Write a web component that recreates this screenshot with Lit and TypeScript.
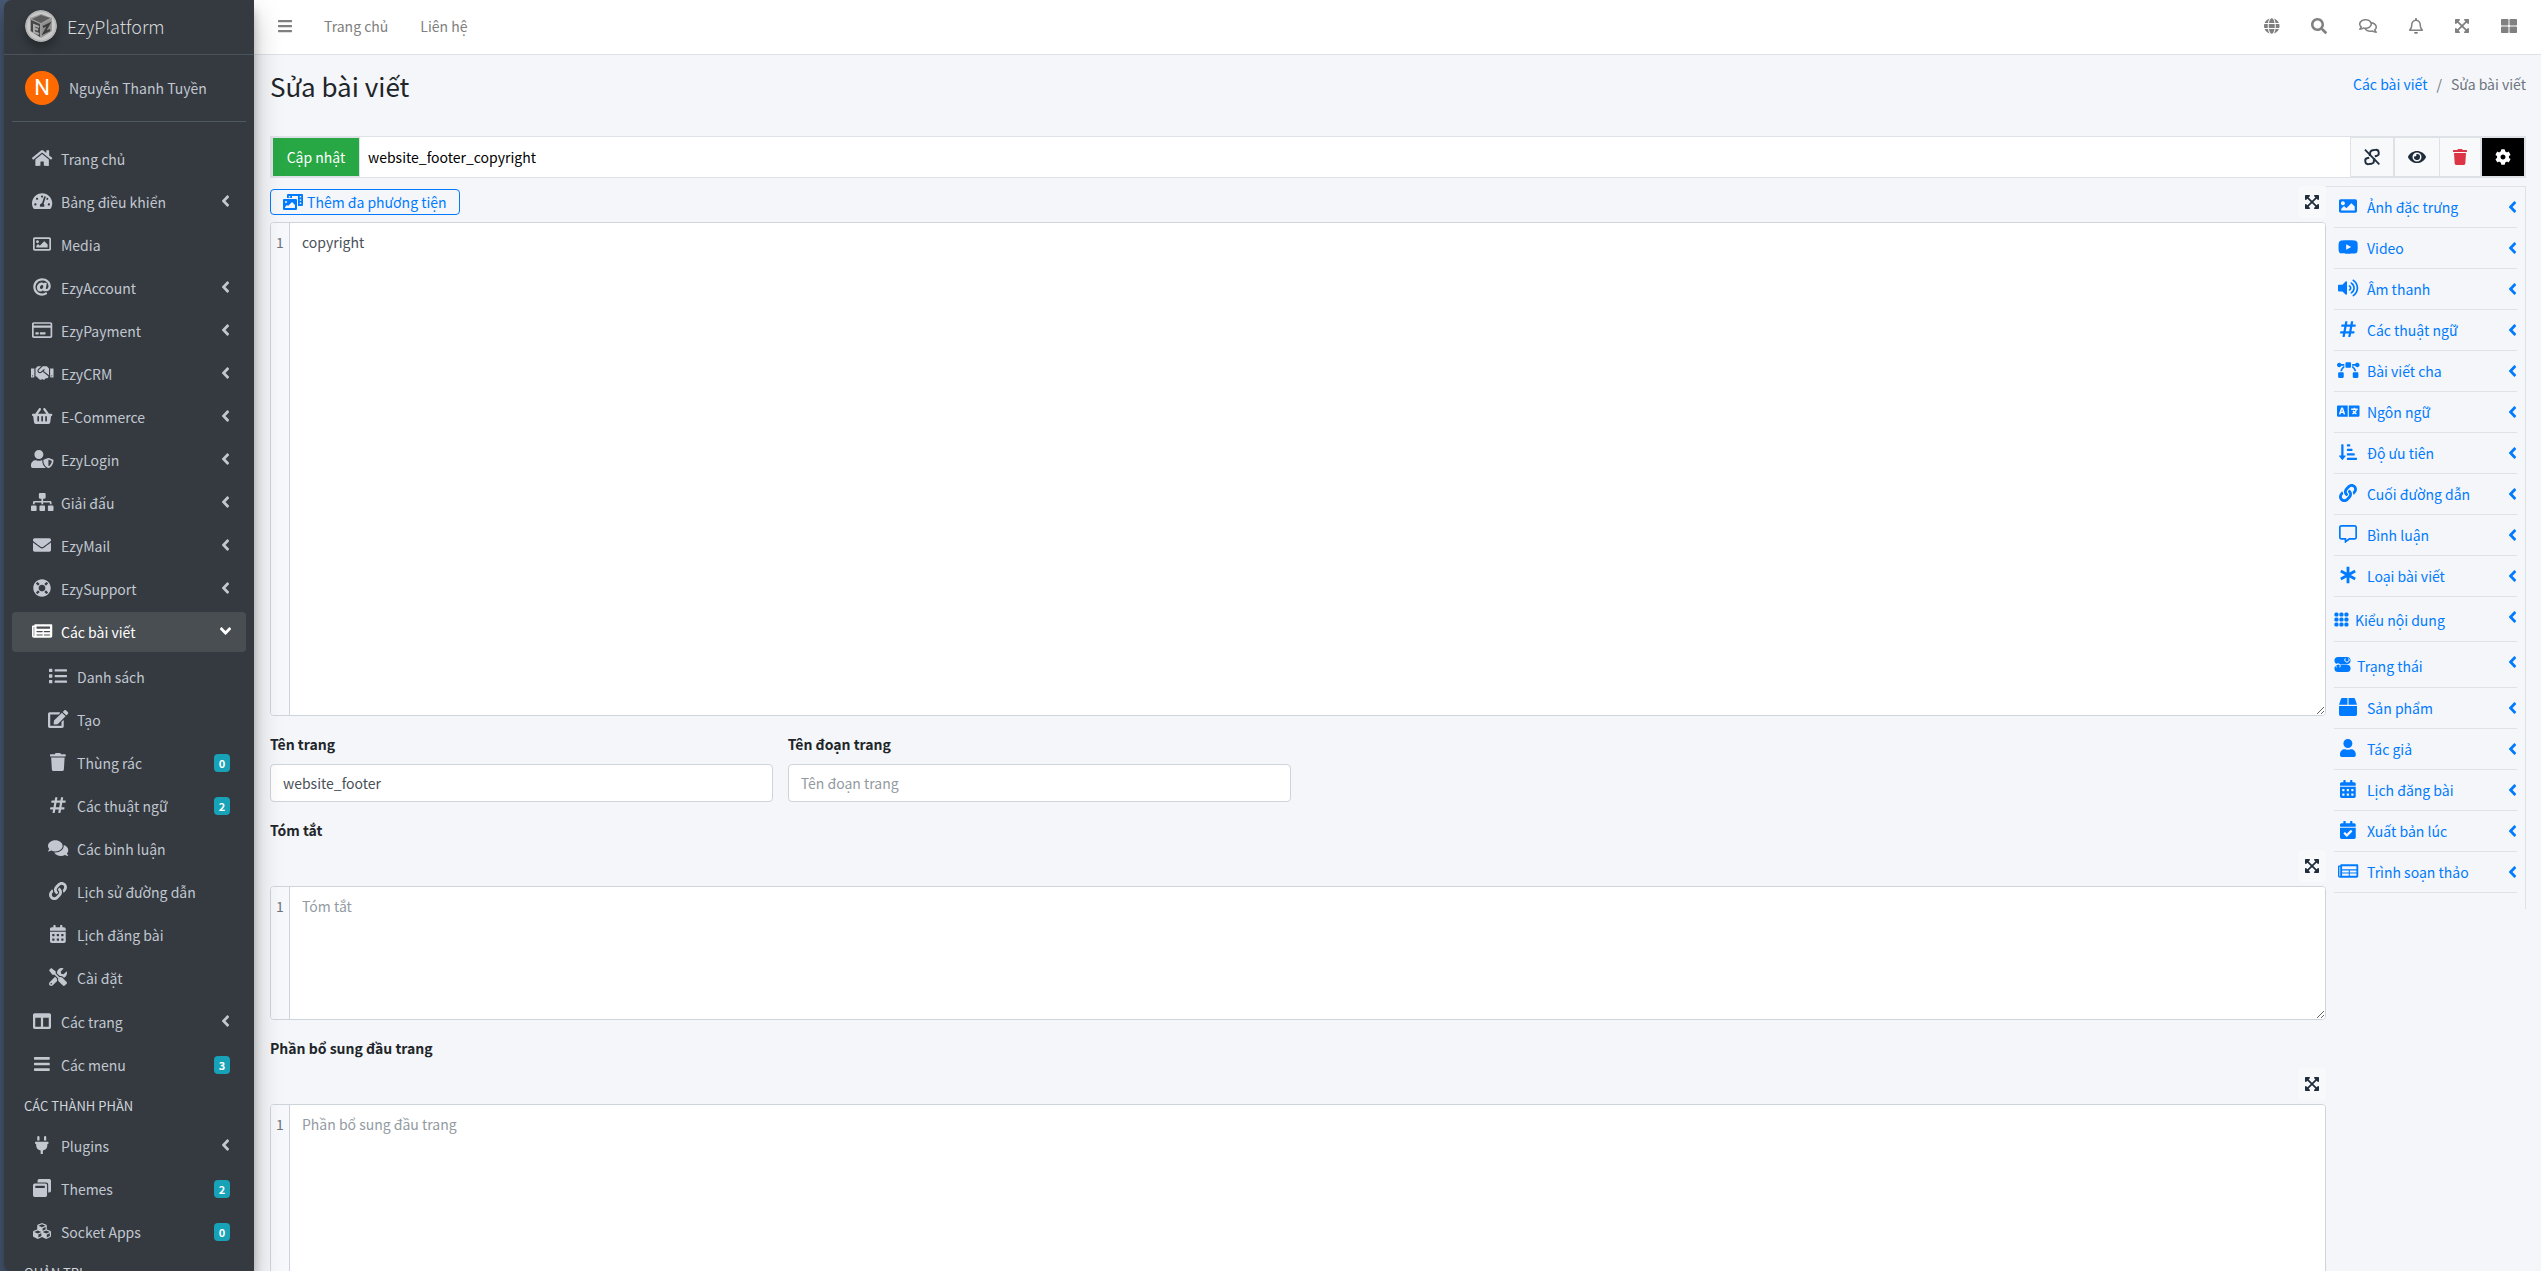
import { LitElement, html, css, svg, nothing } from "lit";
import { customElement, property } from "lit/decorators.js";
import { classMap } from "lit/directives/class-map.js";

type Glyph = { w: number; d?: string; art?: unknown };

const GLYPHS: Record<string, Glyph> = {
  home: { w: 576, d: "M280.37 148.26L96 300.11V464a16 16 0 0 0 16 16l112.06-.29a16 16 0 0 0 15.92-16V368a16 16 0 0 1 16-16h64a16 16 0 0 1 16 16v95.64a16 16 0 0 0 16 16.05L464 480a16 16 0 0 0 16-16V300L295.67 148.26a12.19 12.19 0 0 0-15.3 0zM571.6 251.47L488 182.56V44.05a12 12 0 0 0-12-12h-56a12 12 0 0 0-12 12v72.61L318.47 43a48 48 0 0 0-61 0L4.34 251.47a12 12 0 0 0-1.6 16.9l25.5 31A12 12 0 0 0 45.15 301l235.22-193.74a12.19 12.19 0 0 1 15.3 0L530.9 301a12 12 0 0 0 16.9-1.6l25.5-31a12 12 0 0 0-1.7-16.93z" },
  gauge: { w: 576, d: "M288 32C128.94 32 0 160.94 0 320c0 52.8 14.25 102.26 39.06 144.8 5.61 9.62 16.3 15.2 27.44 15.2h443c11.14 0 21.83-5.58 27.44-15.2C561.75 422.26 576 372.8 576 320c0-159.06-128.94-288-288-288zm0 64c14.71 0 26.58 10.13 30.32 23.65-1.11 2.26-2.64 4.23-3.45 6.67l-9.22 27.67c-5.13 3.49-10.97 6.01-17.64 6.01-17.67 0-32-14.33-32-32S270.33 96 288 96zM96 384c-17.67 0-32-14.33-32-32s14.33-32 32-32 32 14.33 32 32-14.33 32-32 32zm48-160c-17.67 0-32-14.33-32-32s14.33-32 32-32 32 14.33 32 32-14.33 32-32 32zm246.77-72.41l-61.33 184C343.13 347.33 352 364.54 352 384c0 11.72-3.38 22.55-8.88 32H232.88c-5.5-9.45-8.88-20.28-8.88-32 0-33.94 26.5-61.43 59.9-63.59l61.34-184.01c4.17-12.56 17.73-19.45 30.36-15.17 12.57 4.19 19.35 17.79 15.17 30.36zm14.66 57.2l15.52-46.55c3.47-1.29 7.13-2.23 11.05-2.23 17.67 0 32 14.33 32 32s-14.33 32-32 32c-11.38-.01-20.89-6.28-26.57-15.22zM480 384c-17.67 0-32-14.33-32-32s14.33-32 32-32 32 14.33 32 32-14.33 32-32 32z" },
  imageOutline: { w: 512, d: "M464 64H48C21.49 64 0 85.49 0 112v288c0 26.51 21.49 48 48 48h416c26.51 0 48-21.49 48-48V112c0-26.51-21.49-48-48-48zm-6 336H54a6 6 0 0 1-6-6V118a6 6 0 0 1 6-6h404a6 6 0 0 1 6 6v276a6 6 0 0 1-6 6zM128 152c-22.091 0-40 17.909-40 40s17.909 40 40 40 40-17.909 40-40-17.909-40-40-40zM96 352h320v-80l-87.515-87.515c-4.686-4.686-12.284-4.686-16.971 0L192 304l-39.515-39.515c-4.686-4.686-12.284-4.686-16.971 0L96 304v48z" },
  at: { w: 512, d: "M256 8C118.941 8 8 118.919 8 256c0 137.059 110.919 248 248 248 48.154 0 95.342-14.14 135.408-40.223 12.005-7.815 14.625-24.288 5.552-35.372l-10.177-12.433c-7.671-9.371-21.179-11.667-31.373-5.129C325.92 429.757 291.314 440 256 440c-101.458 0-184-82.542-184-184S154.542 72 256 72c100.139 0 184 57.619 184 160 0 38.786-21.093 79.742-58.17 83.693-17.349-.454-16.91-12.857-13.476-30.024l23.433-121.11C394.653 149.75 383.308 136 368.225 136h-44.981a13.518 13.518 0 0 0-13.432 11.993l-.01.092c-14.697-17.901-40.448-21.775-59.971-21.775-74.58 0-137.831 62.234-137.831 151.46 0 65.303 36.785 105.87 96 105.87 26.984 0 57.369-15.637 74.991-38.333 9.522 34.104 40.613 34.104 70.71 34.104C462.609 379.41 504 307.798 504 232 504 95.653 394.023 8 256 8zm-21.68 304.43c-22.249 0-36.07-15.623-36.07-40.771 0-44.993 30.779-72.729 58.63-72.729 22.292 0 35.601 15.241 35.601 40.77 0 45.061-33.875 72.73-58.161 72.73z" },
  card: { w: 576, d: "M527.9 32H48.1C21.5 32 0 53.5 0 80v352c0 26.5 21.5 48 48.1 48h479.8c26.6 0 48.1-21.5 48.1-48V80c0-26.5-21.5-48-48.1-48zM54.1 80h467.8c3.3 0 6 2.7 6 6v42H48.1V86c0-3.3 2.7-6 6-6zm467.8 352H54.1c-3.3 0-6-2.7-6-6V192h479.8v234c0 3.3-2.7 6-6 6zM192 332v40c0 6.6-5.4 12-12 12h-72c-6.6 0-12-5.4-12-12v-40c0-6.6 5.4-12 12-12h72c6.6 0 12 5.4 12 12zm192 0v40c0 6.6-5.4 12-12 12H236c-6.6 0-12-5.4-12-12v-40c0-6.6 5.4-12 12-12h136c6.6 0 12 5.4 12 12z" },
  handshake: { w: 640, d: "M434.7 64h-85.9c-8 0-15.7 3-21.6 8.4l-98.3 90c-.1.1-.2.3-.3.4-16.6 15.6-16.3 40.5-2.1 56 12.7 13.9 39.4 17.6 56.1 2.7.1-.1.3-.1.4-.2l79.9-73.2c6.5-5.9 16.7-5.5 22.6 1 6 6.5 5.5 16.6-1 22.6l-26.1 23.9L504 313.8c2.9 2.4 5.5 5 7.9 7.7V128l-54.6-54.6c-5.9-6-14.1-9.4-22.6-9.4zM544 128.2v223.9c0 17.7 14.3 32 32 32h64V128.2h-96zm48 223.9c-8.8 0-16-7.2-16-16s7.2-16 16-16 16 7.2 16 16-7.2 16-16 16zM0 384h64c17.7 0 32-14.3 32-32V128.2H0V384zm48-63.9c8.8 0 16 7.2 16 16s-7.2 16-16 16-16-7.2-16-16c0-8.9 7.2-16 16-16zm435.9 18.6L334.6 217.5l-30 27.5c-29.7 27.1-75.2 24.5-101.7-4.4-26.9-29.4-24.8-74.9 4.4-101.7L289.1 64h-83.8c-8.5 0-16.6 3.4-22.6 9.4L128 128v223.9h18.3l90.5 81.9c27.4 22.3 67.7 18.1 90-9.3l.2-.2 17.9 15.5c15.9 13 39.4 10.5 52.3-5.4l31.4-38.6 5.4 4.4c13.7 11.1 33.9 9.1 45-4.7l9.5-11.7c11.2-13.8 9.1-33.9-4.6-45.1z" },
  basket: { w: 576, d: "M576 216v16c0 13.255-10.745 24-24 24h-8l-26.113 182.788C514.509 462.435 494.257 480 470.37 480H105.63c-23.887 0-44.139-17.565-47.518-41.212L32 256h-8c-13.255 0-24-10.745-24-24v-16c0-13.255 10.745-24 24-24h67.341l106.78-146.821c10.395-14.292 30.407-17.453 44.701-7.058 14.293 10.395 17.453 30.408 7.058 44.701L170.477 192h235.046L326.12 82.821c-10.395-14.292-7.234-34.306 7.059-44.701 14.291-10.395 34.306-7.235 44.701 7.058L484.659 192H552c13.255 0 24 10.745 24 24zM312 392V280c0-13.255-10.745-24-24-24s-24 10.745-24 24v112c0 13.255 10.745 24 24 24s24-10.745 24-24zm112 0V280c0-13.255-10.745-24-24-24s-24 10.745-24 24v112c0 13.255 10.745 24 24 24s24-10.745 24-24zm-224 0V280c0-13.255-10.745-24-24-24s-24 10.745-24 24v112c0 13.255 10.745 24 24 24s24-10.745 24-24z" },
  userShield: { w: 640, d: "M622.3 271.1l-115.2-45c-4.1-1.6-12.6-3.7-22.2 0l-115.2 45c-10.7 4.2-17.7 14-17.7 24.9 0 111.6 68.7 188.8 132.9 213.9 9.6 3.7 18 1.6 22.2 0C558.4 489.9 640 420.5 640 296c0-10.9-7-20.7-17.7-24.9zM496 462.4V273.3l95.5 37.3c-5.6 87.1-60.9 135.4-95.5 151.8zM224 256c70.7 0 128-57.3 128-128S294.7 0 224 0 96 57.3 96 128s57.3 128 128 128zm96 40c0-2.5.8-4.8 1.1-7.2-2.5-.1-4.9-.8-7.5-.8h-16.7c-22.2 10.2-46.9 16-72.9 16s-50.6-5.8-72.9-16h-16.7C60.2 288 0 348.2 0 422.4V464c0 26.5 21.5 48 48 48h352c6.8 0 13.3-1.5 19.2-4-54-42.9-99.2-116.7-99.2-212z" },
  sitemap: { w: 640, d: "M128 352H32c-17.67 0-32 14.33-32 32v96c0 17.67 14.33 32 32 32h96c17.67 0 32-14.33 32-32v-96c0-17.67-14.33-32-32-32zm-24-80h192v48h48v-48h192v48h48v-57.59c0-21.17-17.23-38.41-38.41-38.41H344v-64h40c17.67 0 32-14.33 32-32V32c0-17.67-14.33-32-32-32H256c-17.67 0-32 14.33-32 32v96c0 17.67 14.33 32 32 32h40v64H94.41C73.23 224 56 241.23 56 262.41V320h48v-48zm264 80h-96c-17.67 0-32 14.33-32 32v96c0 17.67 14.33 32 32 32h96c17.67 0 32-14.33 32-32v-96c0-17.67-14.33-32-32-32zm240 0h-96c-17.67 0-32 14.33-32 32v96c0 17.67 14.33 32 32 32h96c17.67 0 32-14.33 32-32v-96c0-17.67-14.33-32-32-32z" },
  envelope: { w: 512, d: "M502.3 190.8c3.9-3.1 9.7-.2 9.7 4.7V400c0 26.5-21.5 48-48 48H48c-26.5 0-48-21.5-48-48V195.6c0-5 5.7-7.8 9.7-4.7 22.4 17.4 52.1 39.5 154.1 113.6 21.1 15.4 56.7 47.8 92.2 47.6 35.7.3 72-32.8 92.3-47.6 102-74.1 131.6-96.3 154-113.7zM256 320c23.2.4 56.6-29.2 73.4-41.4 132.7-96.3 142.8-104.7 173.4-128.7 5.8-4.5 9.2-11.5 9.2-18.9v-19c0-26.5-21.5-48-48-48H48c-26.5 0-48 21.5-48 48v19c0 7.4 3.4 14.3 9.2 18.9 30.6 23.9 40.7 32.4 173.4 128.7 16.8 12.2 50.2 41.8 73.4 41.4z" },
  lifeRing: { w: 512, d: "M256 8C119.033 8 8 119.033 8 256s111.033 248 248 248 248-111.033 248-248S392.967 8 256 8zm173.696 119.559l-63.399 63.399c-10.987-18.559-26.67-34.252-45.255-45.255l63.399-63.399a218.396 218.396 0 0 1 45.255 45.255zM256 352c-53.019 0-96-42.981-96-96s42.981-96 96-96 96 42.981 96 96-42.981 96-96 96zM127.559 82.304l63.399 63.399c-18.559 10.987-34.252 26.67-45.255 45.255l-63.399-63.399a218.372 218.372 0 0 1 45.255-45.255zM82.304 384.441l63.399-63.399c10.987 18.559 26.67 34.252 45.255 45.255l-63.399 63.399a218.396 218.396 0 0 1-45.255-45.255zm302.137 45.255l-63.399-63.399c18.559-10.987 34.252-26.67 45.255-45.255l63.399 63.399a218.403 218.403 0 0 1-45.255 45.255z" },
  newspaper: { w: 576, d: "M552 64H88c-13.255 0-24 10.745-24 24v8H24c-13.255 0-24 10.745-24 24v272c0 30.928 25.072 56 56 56h472c26.51 0 48-21.49 48-48V88c0-13.255-10.745-24-24-24zM56 400a8 8 0 0 1-8-8V144h16v248a8 8 0 0 1-8 8zm236-16H140c-6.627 0-12-5.373-12-12v-8c0-6.627 5.373-12 12-12h152c6.627 0 12 5.373 12 12v8c0 6.627-5.373 12-12 12zm208 0H348c-6.627 0-12-5.373-12-12v-8c0-6.627 5.373-12 12-12h152c6.627 0 12 5.373 12 12v8c0 6.627-5.373 12-12 12zm-208-96H140c-6.627 0-12-5.373-12-12v-8c0-6.627 5.373-12 12-12h152c6.627 0 12 5.373 12 12v8c0 6.627-5.373 12-12 12zm208 0H348c-6.627 0-12-5.373-12-12v-8c0-6.627 5.373-12 12-12h152c6.627 0 12 5.373 12 12v8c0 6.627-5.373 12-12 12zm0-96H140c-6.627 0-12-5.373-12-12v-40c0-6.627 5.373-12 12-12h360c6.627 0 12 5.373 12 12v40c0 6.627-5.373 12-12 12z" },
  list: { w: 512, d: "M80 368H16a16 16 0 0 0-16 16v64a16 16 0 0 0 16 16h64a16 16 0 0 0 16-16v-64a16 16 0 0 0-16-16zm0-320H16A16 16 0 0 0 0 64v64a16 16 0 0 0 16 16h64a16 16 0 0 0 16-16V64a16 16 0 0 0-16-16zm0 160H16a16 16 0 0 0-16 16v64a16 16 0 0 0 16 16h64a16 16 0 0 0 16-16v-64a16 16 0 0 0-16-16zm416 176H176a16 16 0 0 0-16 16v32a16 16 0 0 0 16 16h320a16 16 0 0 0 16-16v-32a16 16 0 0 0-16-16zm0-320H176a16 16 0 0 0-16 16v32a16 16 0 0 0 16 16h320a16 16 0 0 0 16-16V80a16 16 0 0 0-16-16zm0 160H176a16 16 0 0 0-16 16v32a16 16 0 0 0 16 16h320a16 16 0 0 0 16-16v-32a16 16 0 0 0-16-16z" },
  edit: { w: 576, d: "M402.6 83.2l90.2 90.2c3.8 3.8 3.8 10 0 13.8L274.4 405.6l-92.8 10.3c-12.4 1.4-22.9-9.1-21.5-21.5l10.3-92.8L388.8 83.2c3.8-3.8 10-3.8 13.8 0zm162-22.9l-48.8-48.8c-15.2-15.2-39.9-15.2-55.2 0l-35.4 35.4c-3.8 3.8-3.8 10 0 13.8l90.2 90.2c3.8 3.8 10 3.8 13.8 0l35.4-35.4c15.2-15.3 15.2-40 0-55.2zM384 346.2V448H64V128h229.8c3.2 0 6.2-1.3 8.5-3.5l40-40c7.6-7.6 2.2-20.5-8.5-20.5H48C21.5 64 0 85.5 0 112v352c0 26.5 21.5 48 48 48h352c26.5 0 48-21.5 48-48V306.2c0-10.7-12.9-16-20.5-8.5l-40 40c-2.2 2.3-3.5 5.3-3.5 8.5z" },
  trash: { w: 448, d: "M432 32H312l-9.4-18.7A24 24 0 0 0 281.1 0H166.8a23.72 23.72 0 0 0-21.4 13.3L136 32H16A16 16 0 0 0 0 48v32a16 16 0 0 0 16 16h416a16 16 0 0 0 16-16V48a16 16 0 0 0-16-16zM53.2 467a48 48 0 0 0 47.9 45h245.8a48 48 0 0 0 47.9-45L416 128H32z" },
  hash: { w: 448, d: "M440.667 182.109l7.143-40c1.313-7.355-4.342-14.109-11.813-14.109h-74.81l14.623-81.891C377.123 38.754 371.468 32 363.997 32h-40.632a12 12 0 0 0-11.813 9.891L296.175 128H197.54l14.623-81.891C213.477 38.754 207.822 32 200.35 32h-40.632a12 12 0 0 0-11.813 9.891L132.528 128H53.432a12 12 0 0 0-11.813 9.891l-7.143 40C33.163 185.246 38.818 192 46.289 192h74.81L98.242 320H19.146a12 12 0 0 0-11.813 9.891l-7.143 40C-1.123 377.246 4.532 384 12.003 384h74.81L72.19 465.891C70.877 473.246 76.532 480 84.003 480h40.632a12 12 0 0 0 11.813-9.891L151.826 384h98.634l-14.623 81.891C234.523 473.246 240.178 480 247.65 480h40.632a12 12 0 0 0 11.813-9.891L315.472 384h79.096a12 12 0 0 0 11.813-9.891l7.143-40c1.313-7.355-4.342-14.109-11.813-14.109h-74.81l22.857-128h79.096a12 12 0 0 0 11.813-9.891zM261.889 320h-98.634l22.857-128h98.634l-22.857 128z" },
  comments: { w: 576, d: "M416 192c0-88.4-93.1-160-208-160S0 103.6 0 192c0 34.3 14.1 65.9 38 92-13.4 30.2-35.5 54.2-35.8 54.5-2.2 2.3-2.8 5.7-1.5 8.7S4.8 352 8 352c36.6 0 66.9-12.3 88.7-25 32.2 15.7 70.3 25 111.3 25 114.9 0 208-71.6 208-160zm122 220c23.9-26 38-57.7 38-92 0-66.9-53.5-124.2-129.3-148.1.9 6.6 1.3 13.3 1.3 20.1 0 105.9-107.7 192-240 192-10.8 0-21.3-.8-31.7-1.9C207.8 439.6 281.8 480 368 480c41 0 79.1-9.2 111.3-25 21.8 12.7 52.1 25 88.7 25 3.2 0 6.1-1.9 7.3-4.8 1.3-2.9.7-6.3-1.5-8.7-.3-.3-22.4-24.2-35.8-54.5z" },
  commentsOutline: { w: 576, d: "M532 386.2c27.5-27.1 44-61.1 44-98.2 0-80-76.5-146.1-176.2-157.9C368.3 72.5 294.3 32 208 32 93.1 32 0 103.6 0 192c0 37 16.5 71 44 98.2-15.3 30.7-37.3 54.5-37.7 54.9-6.3 6.7-8.1 16.5-4.4 25 3.6 8.5 12 14 21.2 14 53.5 0 96.7-20.2 125.2-38.8 9.2 2.1 18.7 3.7 28.4 4.9C208.1 407.6 281.8 448 368 448c20.8 0 40.8-2.4 59.8-6.8C456.3 459.7 499.4 480 553 480c9.2 0 17.5-5.5 21.2-14 3.6-8.5 1.9-18.3-4.4-25-.4-.3-22.5-24.1-37.8-54.8zm-392.8-92.3L122.1 305c-14.1 9.1-28.5 16.3-43.1 21.4 2.7-4.7 5.4-9.7 8-14.8l15.5-31.1L77.7 256C64.2 242.6 48 220.7 48 192c0-60.7 73.3-112 160-112s160 51.3 160 112-73.3 112-160 112c-16.5 0-33-1.9-49-5.6l-19.8-4.5zM498.3 352l-24.7 24.4 15.5 31.1c2.6 5.1 5.3 10.1 8 14.8-14.6-5.1-29-12.3-43.1-21.4l-17.1-11.1-19.9 4.6c-16 3.7-32.5 5.6-49 5.6-54 0-102.2-20.1-131.3-49.7C338 339.5 416 272.9 416 192c0-3.4-.4-6.7-.7-10C479.7 196.5 528 238.8 528 288c0 28.7-16.2 50.6-29.7 64z" },
  link: { w: 512, d: "M326.612 185.391c59.747 59.809 58.927 155.698.36 214.59-.11.12-.24.25-.36.37l-67.2 67.2c-59.27 59.27-155.699 59.262-214.96 0-59.27-59.26-59.27-155.7 0-214.96l37.106-37.106c9.84-9.84 26.786-3.3 27.294 10.606.648 17.722 3.826 35.527 9.69 52.721 1.986 5.822.567 12.262-3.783 16.612l-13.087 13.087c-28.026 28.026-28.905 73.66-1.155 101.96 28.024 28.579 74.086 28.749 102.325.51l67.2-67.19c28.191-28.191 28.073-73.757 0-101.83-3.701-3.694-7.429-6.564-10.341-8.569a16.037 16.037 0 0 1-6.947-12.606c-.396-10.567 3.348-21.456 11.698-29.806l21.054-21.055c5.521-5.521 14.182-6.199 20.584-1.731a152.482 152.482 0 0 1 20.522 17.197zM467.547 44.449c-59.261-59.262-155.69-59.27-214.96 0l-67.2 67.2c-.12.12-.25.25-.36.37-58.566 58.892-59.387 154.781.36 214.59a152.454 152.454 0 0 0 20.521 17.196c6.402 4.468 15.064 3.789 20.584-1.731l21.054-21.055c8.35-8.35 12.094-19.239 11.698-29.806a16.037 16.037 0 0 0-6.947-12.606c-2.912-2.005-6.64-4.875-10.341-8.569-28.073-28.073-28.191-73.639 0-101.83l67.2-67.19c28.239-28.239 74.3-28.069 102.325.51 27.75 28.3 26.872 73.934-1.155 101.96l-13.087 13.087c-4.35 4.35-5.769 10.79-3.783 16.612 5.864 17.194 9.042 34.999 9.69 52.721.509 13.906 17.454 20.446 27.294 10.606l37.106-37.106c59.271-59.259 59.271-155.699.001-214.959z" },
  calendar: { w: 448, d: "M0 464c0 26.5 21.5 48 48 48h352c26.5 0 48-21.5 48-48V192H0v272zm320-196c0-6.6 5.4-12 12-12h40c6.6 0 12 5.4 12 12v40c0 6.6-5.4 12-12 12h-40c-6.6 0-12-5.4-12-12v-40zm0 128c0-6.6 5.4-12 12-12h40c6.6 0 12 5.4 12 12v40c0 6.6-5.4 12-12 12h-40c-6.6 0-12-5.4-12-12v-40zM192 268c0-6.6 5.4-12 12-12h40c6.6 0 12 5.4 12 12v40c0 6.6-5.4 12-12 12h-40c-6.6 0-12-5.4-12-12v-40zm0 128c0-6.6 5.4-12 12-12h40c6.6 0 12 5.4 12 12v40c0 6.6-5.4 12-12 12h-40c-6.6 0-12-5.4-12-12v-40zM64 268c0-6.6 5.4-12 12-12h40c6.6 0 12 5.4 12 12v40c0 6.6-5.4 12-12 12H76c-6.6 0-12-5.4-12-12v-40zm0 128c0-6.6 5.4-12 12-12h40c6.6 0 12 5.4 12 12v40c0 6.6-5.4 12-12 12H76c-6.6 0-12-5.4-12-12v-40zM400 64h-48V16c0-8.8-7.2-16-16-16h-32c-8.8 0-16 7.2-16 16v48H160V16c0-8.8-7.2-16-16-16h-32c-8.8 0-16 7.2-16 16v48H48C21.5 64 0 85.5 0 112v48h448v-48c0-26.5-21.5-48-48-48z" },
  calendarCheck: { w: 448, d: "M436 160H12c-6.627 0-12-5.373-12-12v-36c0-26.51 21.49-48 48-48h48V12c0-6.627 5.373-12 12-12h40c6.627 0 12 5.373 12 12v52h128V12c0-6.627 5.373-12 12-12h40c6.627 0 12 5.373 12 12v52h48c26.51 0 48 21.49 48 48v36c0 6.627-5.373 12-12 12zM12 192h424c6.627 0 12 5.373 12 12v260c0 26.51-21.49 48-48 48H48c-26.51 0-48-21.49-48-48V204c0-6.627 5.373-12 12-12zm333.296 95.947l-28.169-28.398c-4.667-4.705-12.265-4.736-16.97-.068L194.12 364.665l-45.98-46.352c-4.667-4.705-12.266-4.736-16.971-.068l-28.397 28.17c-4.705 4.667-4.736 12.265-.068 16.97l82.601 83.269c4.667 4.705 12.265 4.736 16.97.068l142.953-141.805c4.705-4.667 4.736-12.265.068-16.97z" },
  tools: { w: 512, d: "M501.1 395.7L384 278.6c-23.1-23.1-57.6-27.6-85.4-13.9L192 158.1V96L64 0 0 64l96 128h62.1l106.6 106.6c-13.6 27.8-9.2 62.3 13.9 85.4l117.1 117.1c14.6 14.6 38.2 14.6 52.7 0l52.7-52.7c14.5-14.6 14.5-38.2 0-52.7zM331.7 225c28.3 0 54.9 11 74.9 31l19.4 19.4c15.8-6.9 30.8-16.5 43.8-29.5 37.1-37.1 49.7-89.3 37.9-136.7-2.2-9-13.5-12.1-20.1-5.5l-74.4 74.4-67.9-11.3L334 98.9l74.4-74.4c6.6-6.6 3.4-17.9-5.7-20.2-47.4-11.7-99.6.9-136.6 37.9-28.5 28.5-41.9 66.1-41.2 103.6l82.1 82.1c8.1-1.9 16.5-2.9 24.7-2.9zm-103.9 82l-56.7-56.7L18.7 402.8c-25 25-25 65.5 0 90.5s65.5 25 90.5 0l123.6-123.6c-7.6-19.9-9.9-41.6-5-62.7zM64 472c-13.2 0-24-10.8-24-24 0-13.3 10.7-24 24-24s24 10.7 24 24c0 13.2-10.7 24-24 24z" },
  columns: { w: 512, d: "M464 32H48C21.49 32 0 53.49 0 80v352c0 26.51 21.49 48 48 48h416c26.51 0 48-21.49 48-48V80c0-26.51-21.49-48-48-48zM224 416H64V160h160v256zm224 0H288V160h160v256z" },
  bars: { w: 448, d: "M16 132h416c8.837 0 16-7.163 16-16V76c0-8.837-7.163-16-16-16H16C7.163 60 0 67.163 0 76v40c0 8.837 7.163 16 16 16zm0 160h416c8.837 0 16-7.163 16-16v-40c0-8.837-7.163-16-16-16H16c-8.837 0-16 7.163-16 16v40c0 8.837 7.163 16 16 16zm0 160h416c8.837 0 16-7.163 16-16v-40c0-8.837-7.163-16-16-16H16c-8.837 0-16 7.163-16 16v40c0 8.837 7.163 16 16 16z" },
  plug: { w: 384, d: "M320 32a32 32 0 0 0-64 0v96h64zm48 128H16A16 16 0 0 0 0 176v32a16 16 0 0 0 16 16h16v32a160.07 160.07 0 0 0 128 156.8V512h64v-99.2A160.07 160.07 0 0 0 352 256v-32h16a16 16 0 0 0 16-16v-32a16 16 0 0 0-16-16zM128 32a32 32 0 0 0-64 0v96h64z" },
  themes: {
    w: 512,
    d: "M176 0H464a48 48 0 0 1 48 48V336a48 48 0 0 1-48 48H432V160a64 64 0 0 0-64-64H128V48A48 48 0 0 1 176 0zM48 128H352a48 48 0 0 1 48 48V464a48 48 0 0 1-48 48H48a48 48 0 0 1-48-48V176a48 48 0 0 1 48-48zM80 192a16 16 0 0 0-16 16v32a16 16 0 0 0 16 16H320a16 16 0 0 0 16-16V208a16 16 0 0 0-16-16z",
  },
  cubes: { w: 512, d: "M488.6 250.2L392 214V105.5c0-15-9.3-28.4-23.4-33.7l-100-37.5c-8.1-3.1-17.1-3.1-25.3 0l-100 37.5c-14.1 5.3-23.4 18.7-23.4 33.7V214l-96.6 36.2C9.3 255.5 0 268.9 0 283.9V394c0 13.6 7.7 26.1 19.9 32.2l100 50c10.1 5.1 22.1 5.1 32.2 0l103.9-52 103.9 52c10.1 5.1 22.1 5.1 32.2 0l100-50c12.2-6.1 19.9-18.6 19.9-32.2V283.9c0-15-9.3-28.4-23.4-33.7zM358 214.8l-85 31.9v-68.2l85-37v73.3zM154 104.1l102-38.2 102 38.2v.6l-102 41.4-102-41.4v-.6zm84 291.1l-85 42.5v-79.1l85-38.8v75.4zm0-112l-102 41.4-102-41.4v-.6l102-38.2 102 38.2v.6zm240 112l-85 42.5v-79.1l85-38.8v75.4zm0-112l-102 41.4-102-41.4v-.6l102-38.2 102 38.2v.6z" },
  angle: { w: 256, d: "M31.7 239l136-136c9.4-9.4 24.6-9.4 33.9 0l22.6 22.6c9.4 9.4 9.4 24.6 0 33.9L127.9 256l96.4 96.4c9.4 9.4 9.4 24.6 0 33.9L201.7 409c-9.4 9.4-24.6 9.4-33.9 0l-136-136c-9.5-9.4-9.5-24.6-.1-34z" },
  globe: { w: 496, d: "M336.5 160C322 70.7 287.8 8 248 8s-74 62.7-88.5 152h177zM152 256c0 22.2 1.2 43.5 3.3 64h185.3c2.1-20.5 3.3-41.8 3.3-64s-1.2-43.5-3.3-64H155.3c-2.1 20.5-3.3 41.8-3.3 64zm324.7-96c-28.6-67.9-86.5-120.4-158-141.6 24.4 33.8 41.2 84.7 50 141.6h108zM177.2 18.4C105.8 39.6 47.8 92.1 19.3 160h108c8.7-56.9 25.5-107.8 49.9-141.6zM487.4 192H372.7c2.1 21 3.3 42.5 3.3 64s-1.2 43-3.3 64h114.6c5.5-20.5 8.6-41.8 8.6-64s-3.1-43.5-8.5-64zM120 256c0-21.5 1.2-43 3.3-64H8.6C3.2 212.5 0 233.8 0 256s3.2 43.5 8.6 64h114.6c-2-21-3.2-42.5-3.2-64zm39.5 96c14.5 89.3 48.7 152 88.5 152s74-62.7 88.5-152h-177zm159.3 141.6c71.4-21.2 129.4-73.7 158-141.6h-108c-8.8 56.9-25.6 107.8-50 141.6zM19.3 352c28.6 67.9 86.5 120.4 158 141.6-24.4-33.8-41.2-84.7-50-141.6h-108z" },
  search: { w: 512, d: "M505 442.7L405.3 343c-4.5-4.5-10.6-7-17-7H372c27.6-35.3 44-79.7 44-128C416 93.1 322.9 0 208 0S0 93.1 0 208s93.1 208 208 208c48.3 0 92.7-16.4 128-44v16.3c0 6.4 2.5 12.5 7 17l99.7 99.7c9.4 9.4 24.6 9.4 33.9 0l28.3-28.3c9.4-9.4 9.4-24.6.1-34zM208 336c-70.7 0-128-57.2-128-128 0-70.7 57.2-128 128-128 70.7 0 128 57.2 128 128 0 70.7-57.2 128-128 128z" },
  bell: { w: 448, d: "M439.39 362.29c-19.32-20.76-55.47-51.99-55.47-154.29 0-77.7-54.48-139.9-127.94-155.16V32c0-17.67-14.32-32-31.98-32s-31.98 14.33-31.98 32v20.84C118.56 68.1 64.08 130.3 64.08 208c0 102.3-36.15 133.53-55.47 154.29-6 6.45-8.66 14.16-8.61 21.71.11 16.4 12.98 32 32.1 32h383.8c19.12 0 32-15.6 32.1-32 .05-7.55-2.61-15.27-8.61-21.71zM67.53 368c21.22-27.97 44.42-74.33 44.53-159.42 0-.2-.06-.38-.06-.58 0-61.86 50.14-112 112-112s112 50.14 112 112c0 .2-.06.38-.06.58.11 85.1 23.31 131.46 44.53 159.42H67.53zM224 512c35.32 0 63.97-28.65 63.97-64H160.03c0 35.35 28.65 64 63.97 64z" },
  expand: { w: 448, d: "M448 344v112a23.94 23.94 0 0 1-24 24H312c-21.39 0-32.09-25.9-17-41l36.2-36.2L224 295.6 116.77 402.9 153 439c15.09 15.1 4.39 41-17 41H24a23.94 23.94 0 0 1-24-24V344c0-21.4 25.89-32.1 41-17l36.19 36.2L184.46 256 77.18 148.7 41 185c-15.1 15.1-41 4.4-41-17V56a23.94 23.94 0 0 1 24-24h112c21.39 0 32.09 25.9 17 41l-36.2 36.2L224 216.4l107.23-107.3L295 73c-15.09-15.1-4.39-41 17-41h112a23.94 23.94 0 0 1 24 24v112c0 21.4-25.89 32.1-41 17l-36.19-36.2L263.54 256l107.28 107.3L407 327.1c15.1-15.2 41-4.5 41 16.9z" },
  tiles: { w: 512, d: "M296 32h192c13.255 0 24 10.745 24 24v160c0 13.255-10.745 24-24 24H296c-13.255 0-24-10.745-24-24V56c0-13.255 10.745-24 24-24zm-80 0H24C10.745 32 0 42.745 0 56v160c0 13.255 10.745 24 24 24h192c13.255 0 24-10.745 24-24V56c0-13.255-10.745-24-24-24zM0 296v160c0 13.255 10.745 24 24 24h192c13.255 0 24-10.745 24-24V296c0-13.255-10.745-24-24-24H24c-13.255 0-24 10.745-24 24zm296 184h192c13.255 0 24-10.745 24-24V296c0-13.255-10.745-24-24-24H296c-13.255 0-24 10.745-24 24v160c0 13.255 10.745 24 24 24z" },
  unlink: {
    w: 512,
    art: svg`<g fill="none" stroke="currentColor" stroke-width="60"><path d="M195 160V125a92 92 0 0 1 92-92H380a92 92 0 0 1 92 92V140a92 92 0 0 1-92 92H330" transform="rotate(-8 330 130)" /><path d="M317 352v35a92 92 0 0 1-92 92H132a92 92 0 0 1-92-92V372a92 92 0 0 1 92-92H182" transform="rotate(-8 180 380)" /><path d="M30 20L490 492" stroke-width="56" /><path d="M180 225V150M332 287V362" stroke-width="50" /></g>`,
  },
  eye: { w: 576, d: "M572.52 241.4C518.29 135.59 410.93 64 288 64S57.68 135.64 3.48 241.41a32.35 32.35 0 0 0 0 29.19C57.71 376.41 165.07 448 288 448s230.32-71.64 284.52-177.41a32.35 32.35 0 0 0 0-29.19zM288 400a144 144 0 1 1 144-144 143.93 143.93 0 0 1-144 144zm0-240a95.31 95.31 0 0 0-25.31 3.79 47.85 47.85 0 0 1-66.9 66.9A95.78 95.78 0 1 0 288 160z" },
  cog: { w: 512, d: "M487.4 315.7l-42.6-24.6c4.3-23.2 4.3-47 0-70.2l42.6-24.6c4.9-2.8 7.1-8.6 5.5-14-11.1-35.6-30-67.8-54.7-94.6-3.8-4.1-10-5.1-14.8-2.3L380.8 110c-17.9-15.4-38.5-27.3-60.8-35.1V25.8c0-5.6-3.9-10.5-9.4-11.7-36.7-8.2-74.3-7.8-109.2 0-5.5 1.2-9.4 6.1-9.4 11.7V75c-22.2 7.9-42.8 19.8-60.8 35.1L88.7 85.5c-4.9-2.8-11-1.9-14.8 2.3-24.7 26.7-43.6 58.9-54.7 94.6-1.7 5.4.6 11.2 5.5 14L67.3 221c-4.3 23.2-4.3 47 0 70.2l-42.6 24.6c-4.9 2.8-7.1 8.6-5.5 14 11.1 35.6 30 67.8 54.7 94.6 3.8 4.1 10 5.1 14.8 2.3l42.6-24.6c17.9 15.4 38.5 27.3 60.8 35.1v49.2c0 5.6 3.9 10.5 9.4 11.7 36.7 8.2 74.3 7.8 109.2 0 5.5-1.2 9.4-6.1 9.4-11.7v-49.2c22.2-7.9 42.8-19.8 60.8-35.1l42.6 24.6c4.9 2.8 11 1.9 14.8-2.3 24.7-26.7 43.6-58.9 54.7-94.6 1.5-5.5-.7-11.3-5.6-14.1zM256 336c-44.1 0-80-35.9-80-80s35.9-80 80-80 80 35.9 80 80-35.9 80-80 80z" },
  image: { w: 512, d: "M464 448H48c-26.51 0-48-21.49-48-48V112c0-26.51 21.49-48 48-48h416c26.51 0 48 21.49 48 48v288c0 26.51-21.49 48-48 48zM112 120c-30.928 0-56 25.072-56 56s25.072 56 56 56 56-25.072 56-56-25.072-56-56-56zM64 384h384V272l-87.515-87.515c-4.686-4.686-12.284-4.686-16.971 0L208 320l-55.515-55.515c-4.686-4.686-12.284-4.686-16.971 0L64 336v48z" },
  video: { w: 576, d: "M549.655 124.083c-6.281-23.65-24.787-42.276-48.284-48.597C458.781 64 288 64 288 64S117.22 64 74.629 75.486c-23.497 6.322-42.003 24.947-48.284 48.597-11.412 42.867-11.412 132.305-11.412 132.305s0 89.438 11.412 132.305c6.281 23.65 24.787 41.5 48.284 47.821C117.22 448 288 448 288 448s170.78 0 213.371-11.486c23.497-6.321 42.003-24.171 48.284-47.821 11.412-42.867 11.412-132.305 11.412-132.305s0-89.438-11.412-132.305zm-317.51 213.508V175.185l142.739 81.205-142.739 81.201z" },
  volume: { w: 576, d: "M215.03 71.05L126.06 160H24c-13.26 0-24 10.74-24 24v144c0 13.25 10.74 24 24 24h102.06l88.97 88.95c15.03 15.03 40.97 4.47 40.97-16.97V88.02c0-21.46-25.96-31.98-40.97-16.97zm233.32-51.08c-11.17-7.33-26.18-4.24-33.51 6.95-7.34 11.17-4.22 26.18 6.95 33.51 66.27 43.49 105.82 116.6 105.82 195.58 0 78.98-39.55 152.09-105.82 195.58-11.17 7.32-14.29 22.34-6.95 33.5 7.04 10.71 21.93 14.56 33.51 6.95C528.27 439.58 576 351.33 576 256S528.27 72.43 448.35 19.97zM480 256c0-63.53-32.06-121.94-85.77-156.24-11.19-7.14-26.03-3.82-33.12 7.46s-3.78 26.21 7.41 33.36C408.27 165.97 432 209.11 432 256s-23.73 90.02-63.48 115.42c-11.19 7.14-14.5 22.07-7.41 33.36 6.51 10.36 21.12 15.14 33.12 7.46C447.94 377.94 480 319.54 480 256zm-141.77-76.87c-11.58-6.33-26.19-2.16-32.61 9.45-6.39 11.61-2.16 26.2 9.45 32.61C327.98 228.28 336 241.63 336 256c0 14.38-8.02 27.72-20.92 34.81-11.61 6.41-15.84 21-9.45 32.61 6.43 11.66 21.05 15.8 32.61 9.45 28.23-15.55 45.77-45 45.77-76.88s-17.54-61.32-45.78-76.86z" },
  bezier: { w: 640, d: "M368 32h-96c-17.67 0-32 14.33-32 32v96c0 17.67 14.33 32 32 32h96c17.67 0 32-14.33 32-32V64c0-17.67-14.33-32-32-32zM208 88h-84.75C113.75 64.56 90.84 48 64 48 28.66 48 0 76.65 0 112s28.66 64 64 64c26.84 0 49.75-16.56 59.25-40h79.73c-55.37 32.52-95.86 87.32-109.54 152h49.4c11.3-41.61 36.77-77.21 71.04-101.56-3.7-8.08-5.88-16.99-5.88-26.44V88zm-48 232H64c-17.67 0-32 14.33-32 32v96c0 17.67 14.33 32 32 32h96c17.67 0 32-14.33 32-32v-96c0-17.67-14.33-32-32-32zM576 48c-26.84 0-49.75 16.56-59.25 40H432v72c0 9.45-2.19 18.36-5.88 26.44 34.27 24.35 59.74 59.95 71.04 101.56h49.4c-13.68-64.68-54.17-119.48-109.54-152h79.73c9.5 23.44 32.41 40 59.25 40 35.34 0 64-28.65 64-64s-28.66-64-64-64zm0 272h-96c-17.67 0-32 14.33-32 32v96c0 17.67 14.33 32 32 32h96c17.67 0 32-14.33 32-32v-96c0-17.67-14.33-32-32-32z" },
  language: { w: 640, d: "M152.1 236.2c-3.5-12.1-7.8-33.2-7.8-33.2h-.5s-4.3 21.1-7.8 33.2l-11.1 37.5H163zM616 96H336v320h280c13.3 0 24-10.7 24-24V120c0-13.3-10.7-24-24-24zm-24 120c0 6.6-5.4 12-12 12h-11.4c-6.9 23.6-21.7 47.4-42.7 69.9 8.4 6.4 17.1 12.5 26.1 18 5.5 3.4 7.3 10.5 4.1 16.2l-7.9 13.9c-3.4 5.9-10.9 7.8-16.7 4.3-12.6-7.8-24.5-16.1-35.4-24.9-10.9 8.7-22.7 17.1-35.4 24.9-5.8 3.5-13.3 1.6-16.7-4.3l-7.9-13.9c-3.2-5.6-1.4-12.8 4.2-16.2 9.3-5.7 18-11.7 26.1-18-7.9-8.4-14.9-17-21-25.7-4-5.7-2.2-13.6 3.7-17.1l6.5-3.9 7.3-4.3c5.4-3.2 12.4-1.7 16 3.4 5 7 10.8 14 17.4 20.9 13.5-14.2 23.8-28.9 30-43.2H412c-6.6 0-12-5.4-12-12v-16c0-6.6 5.4-12 12-12h64v-16c0-6.6 5.4-12 12-12h16c6.6 0 12 5.4 12 12v16h64c6.6 0 12 5.4 12 12zM0 120v272c0 13.3 10.7 24 24 24h280V96H24c-13.3 0-24 10.7-24 24zm58.9 216.1L116.4 167c1.7-4.9 6.2-8.1 11.4-8.1h32.5c5.1 0 9.7 3.3 11.4 8.1l57.5 169.1c2.6 7.8-3.1 15.9-11.4 15.9h-22.9a12 12 0 0 1-11.5-8.6l-9.4-31.9h-60.2l-9.1 31.8c-1.5 5.1-6.2 8.7-11.5 8.7H70.3c-8.2 0-14-8.1-11.4-15.9z" },
  sort: { w: 512, d: "M240 96h64a16 16 0 0 0 16-16V48a16 16 0 0 0-16-16h-64a16 16 0 0 0-16 16v32a16 16 0 0 0 16 16zm0 128h128a16 16 0 0 0 16-16v-32a16 16 0 0 0-16-16H240a16 16 0 0 0-16 16v32a16 16 0 0 0 16 16zm256 192H240a16 16 0 0 0-16 16v32a16 16 0 0 0 16 16h256a16 16 0 0 0 16-16v-32a16 16 0 0 0-16-16zm-256-64h192a16 16 0 0 0 16-16v-32a16 16 0 0 0-16-16H240a16 16 0 0 0-16 16v32a16 16 0 0 0 16 16zM176 352h-48V48a16 16 0 0 0-16-16H80a16 16 0 0 0-16 16v304H16c-14.19 0-21.37 17.24-11.29 27.31l80 96a16 16 0 0 0 22.62 0l80-96C197.35 369.26 190.22 352 176 352z" },
  comment: { w: 512, d: "M448 0H64C28.7 0 0 28.7 0 64v288c0 35.3 28.7 64 64 64h96v84c0 7.1 5.8 12 12 12 2.4 0 4.9-.7 7.1-2.4L304 416h144c35.3 0 64-28.7 64-64V64c0-35.3-28.7-64-64-64zm16 352c0 8.8-7.2 16-16 16H288l-12.8 9.6L208 428v-60H64c-8.8 0-16-7.2-16-16V64c0-8.8 7.2-16 16-16h384c8.8 0 16 7.2 16 16v288z" },
  asterisk: { w: 512, art: svg`<path d="M256 24V488M52 140L460 372M460 140L52 372" stroke="currentColor" stroke-width="80" stroke-linecap="butt" />` },
  grid: {
    w: 448,
    art: svg`${[74, 224, 374].map((cx) => [106, 256, 406].map((cy) => svg`<rect x=${cx - 62} y=${cy - 62} width="124" height="124" rx="46" fill="currentColor" />`))}`,
  },
  toggles: {
    w: 512,
    art: svg`<path fill="currentColor" fill-rule="evenodd" d="M122 30H390a108 108 0 0 1 0 216H122a108 108 0 0 1 0-216zM122 266H390a108 108 0 0 1 0 216H122a108 108 0 0 1 0-216z" /><g fill="none" stroke="var(--hole)" stroke-width="30"><path d="M340 74a66 66 0 1 0 100 0" /><path d="M172 438a66 66 0 1 1-100 0" transform="rotate(180 122 390)" /></g>`,
  },
  box: { w: 512, d: "M509.5 184.6L458.9 32.8C452.4 13.2 434.1 0 413.4 0H272v192h238.7c-.4-2.5-.4-5-1.2-7.4zM240 0H98.6c-20.7 0-39 13.2-45.5 32.8L2.5 184.6c-.8 2.4-.8 4.9-1.2 7.4H240V0zM0 224v240c0 26.5 21.5 48 48 48h416c26.5 0 48-21.5 48-48V224H0z" },
  user: { w: 448, d: "M224 256c70.7 0 128-57.3 128-128S294.7 0 224 0 96 57.3 96 128s57.3 128 128 128zm89.6 32h-16.7c-22.2 10.2-46.9 16-72.9 16s-50.6-5.8-72.9-16h-16.7C60.2 288 0 348.2 0 422.4V464c0 26.5 21.5 48 48 48h352c26.5 0 48-21.5 48-48v-41.6c0-74.2-60.2-134.4-134.4-134.4z" },
  editor: {
    w: 576,
    d: "M552 64H88c-13.255 0-24 10.745-24 24v8H24c-13.255 0-24 10.745-24 24v272c0 30.928 25.072 56 56 56h472c26.51 0 48-21.49 48-48V88c0-13.255-10.745-24-24-24zM56 408a16 16 0 0 1-16-16V136h24v256a16 16 0 0 1-8 16zm250-16H116V328h190zm218 0H336V328h188zM306 296H116V240h190zm218 0H336V240h188zm0-92H116V124h408z",
  },
  media: { w: 640, d: "M608 0H160a32 32 0 0 0-32 32v96h160V64h192v320h128a32 32 0 0 0 32-32V32a32 32 0 0 0-32-32zM232 103a9 9 0 0 1-9 9h-30a9 9 0 0 1-9-9V73a9 9 0 0 1 9-9h30a9 9 0 0 1 9 9zm352 208a9 9 0 0 1-9 9h-30a9 9 0 0 1-9-9v-30a9 9 0 0 1 9-9h30a9 9 0 0 1 9 9zm0-104a9 9 0 0 1-9 9h-30a9 9 0 0 1-9-9v-30a9 9 0 0 1 9-9h30a9 9 0 0 1 9 9zm0-104a9 9 0 0 1-9 9h-30a9 9 0 0 1-9-9V73a9 9 0 0 1 9-9h30a9 9 0 0 1 9 9zm-168 57H32a32 32 0 0 0-32 32v288a32 32 0 0 0 32 32h384a32 32 0 0 0 32-32V192a32 32 0 0 0-32-32zM96 224a32 32 0 1 1-32 32 32 32 0 0 1 32-32zm288 224H64v-32l64-64 32 32 128-128 96 96z" },
};

const icon = (name: string, extra = "") => {
  const g = GLYPHS[name];
  return html`<svg class="icon ${extra}" viewBox="0 0 ${g.w} 512" aria-hidden="true">
    ${g.d ? svg`<path fill="currentColor" fill-rule="evenodd" d=${g.d} />` : g.art}
  </svg>`;
};

const base = css`
  *,
  *::before,
  *::after {
    box-sizing: border-box;
  }
  a {
    color: inherit;
    text-decoration: none;
  }
  button,
  input,
  textarea {
    font: inherit;
    margin: 0;
    border: 0;
    outline: 0;
    border-radius: 0;
  }
  button {
    cursor: pointer;
  }
  ul,
  ol {
    list-style: none;
    margin: 0;
    padding: 0;
  }
  .icon {
    display: block;
    height: 16px;
    width: auto;
    flex: none;
    overflow: visible;
  }
`;

interface MenuItem {
  icon: string;
  text: string;
  more?: boolean;
  badge?: number;
  active?: boolean;
  children?: MenuItem[];
}

const MENU: MenuItem[] = [
  { icon: "home", text: "Trang chủ" },
  { icon: "gauge", text: "Bảng điều khiển", more: true },
  { icon: "imageOutline", text: "Media" },
  { icon: "at", text: "EzyAccount", more: true },
  { icon: "card", text: "EzyPayment", more: true },
  { icon: "handshake", text: "EzyCRM", more: true },
  { icon: "basket", text: "E-Commerce", more: true },
  { icon: "userShield", text: "EzyLogin", more: true },
  { icon: "sitemap", text: "Giải đấu", more: true },
  { icon: "envelope", text: "EzyMail", more: true },
  { icon: "lifeRing", text: "EzySupport", more: true },
  {
    icon: "newspaper",
    text: "Các bài viết",
    more: true,
    active: true,
    children: [
      { icon: "list", text: "Danh sách" },
      { icon: "edit", text: "Tạo" },
      { icon: "trash", text: "Thùng rác", badge: 0 },
      { icon: "hash", text: "Các thuật ngữ", badge: 2 },
      { icon: "comments", text: "Các bình luận" },
      { icon: "link", text: "Lịch sử đường dẫn" },
      { icon: "calendar", text: "Lịch đăng bài" },
      { icon: "tools", text: "Cài đặt" },
    ],
  },
  { icon: "columns", text: "Các trang", more: true },
  { icon: "bars", text: "Các menu", badge: 3 },
];

const COMPONENTS: MenuItem[] = [
  { icon: "plug", text: "Plugins", more: true },
  { icon: "themes", text: "Themes", badge: 2 },
  { icon: "cubes", text: "Socket Apps", badge: 0 },
];

@customElement("side-menu")
class SideMenu extends LitElement {
  static styles = [
    base,
    css`
      :host {
        display: block;
        height: 100%;
        overflow: hidden;
        background: #343a40;
        color: #c2c7d0;
        border-radius: 8px 0 0 8px;
      }
      .brand {
        display: flex;
        align-items: center;
        gap: 10px;
        height: 55px;
        padding: 0 21px 2px;
        border-bottom: 1px solid #4b545c;
        color: #d6d8d9;
        font-size: 18px;
        font-weight: 300;
        line-height: 24px;
      }
      .logo {
        display: block;
        width: 32px;
        height: 32px;
        border-radius: 50%;
        box-shadow: 0 6px 10px rgba(0, 0, 0, 0.3);
      }
      .body {
        padding: 0 8px;
      }
      .user {
        display: flex;
        align-items: center;
        gap: 10px;
        height: 67px;
        padding-left: 13px;
        border-bottom: 1px solid #4f5962;
      }
      .avatar {
        display: grid;
        place-items: center;
        width: 34px;
        height: 34px;
        border-radius: 50%;
        background: #ff6a00;
        color: #fff;
        font: 22px/34px Roboto, sans-serif;
      }
      .menu {
        padding-top: 17px;
        display: grid;
        gap: 3px;
      }
      .menu + .heading {
        margin-top: 3px;
      }
      .sub {
        display: grid;
        gap: 3px;
        padding: 5px 0 1px;
      }
      .sub .item {
        padding-left: 32px;
      }
      .item {
        display: flex;
        align-items: center;
        height: 40px;
        padding: 0 16px;
        border-radius: 4px;
      }
      .item.active {
        background: #494e52;
        color: #fff;
      }
      .pic {
        display: grid;
        place-items: center;
        width: 28px;
        margin-right: 5px;
        padding-bottom: 2px;
      }
      .pic .icon,
      .arrow {
        height: 18px;
      }
      .text {
        flex: 1;
      }
      .arrow {
        margin-bottom: 2px;
      }
      .arrow.down {
        transform: rotate(-90deg);
      }
      .badge {
        min-width: 16px;
        padding: 0 4px;
        border-radius: 4px;
        background: #17a2b8;
        color: #fff;
        text-align: center;
        font-size: 11px;
        font-weight: 700;
        line-height: 18px;
      }
      .heading {
        height: 38px;
        padding: 6px 16px 0 12px;
        font-size: 13px;
        line-height: 24px;
        color: #d0d4db;
      }
      .menu.components {
        padding-top: 0;
      }
    `,
  ];

  private item(i: MenuItem): unknown {
    return html`<li>
      <a href="#" class=${classMap({ item: true, active: !!i.active })}>
        <span class="pic">${icon(i.icon)}</span>
        <span class="text">${i.text}</span>
        ${i.more ? icon("angle", i.active ? "arrow down" : "arrow") : nothing}
        ${i.badge === undefined ? nothing : html`<span class="badge">${i.badge}</span>`}
      </a>
      ${i.children ? html`<ul class="sub">${i.children.map((c) => this.item(c))}</ul>` : nothing}
    </li>`;
  }

  render() {
    return html`
      <a class="brand" href="#">
        <svg class="logo" viewBox="0 0 32 32" aria-hidden="true">
          <circle cx="16" cy="16" r="16" fill="#b4b4b4" />
          <circle cx="16" cy="16" r="14" fill="#c8c8c8" />
          <path d="M16 4L27 8V21L16 28L5 21V8Z" fill="#999" />
          <path d="M16 5L25 8L16 13L7 9Z" fill="#5c5c5c" />
          <path d="M6 10L15 14V27L6 21Z" fill="#454545" />
          <path d="M17 14L26 10V21L17 27Z" fill="#8e8e8e" />
          <path d="M14 17L9 15V22L14 24M9 18L13 20" fill="none" stroke="#a8a8a8" stroke-width="2" />
          <path d="M18 17L24 14L19 23L25 20" fill="none" stroke="#3c3c3c" stroke-width="2" />
        </svg>
        <span>EzyPlatform</span>
      </a>
      <div class="body">
        <a class="user" href="#"><span class="avatar">N</span><span>Nguyễn Thanh Tuyền</span></a>
        <nav>
          <ul class="menu">${MENU.map((i) => this.item(i))}</ul>
          <div class="heading">CÁC THÀNH PHẦN</div>
          <ul class="menu components">${COMPONENTS.map((i) => this.item(i))}</ul>
          <div class="heading">QUẢN TRỊ</div>
        </nav>
      </div>
    `;
  }
}

@customElement("top-bar")
class TopBar extends LitElement {
  static styles = [
    base,
    css`
      :host {
        display: flex;
        justify-content: space-between;
        height: 55px;
        padding: 0 8px 2px;
        background: #fff;
        border-bottom: 1px solid #dee2e6;
        color: #808080;
      }
      .group {
        display: flex;
        align-items: center;
      }
      .link {
        display: flex;
        align-items: center;
        padding: 0 16px;
        height: 40px;
        background: none;
        color: inherit;
      }
    `,
  ];

  render() {
    const tools: [string, string][] = [
      ["globe", "Ngôn ngữ"],
      ["search", "Tìm kiếm"],
      ["commentsOutline", "Tin nhắn"],
      ["bell", "Thông báo"],
      ["expand", "Toàn màn hình"],
      ["tiles", "Tiện ích"],
    ];
    return html`
      <div class="group">
        <button class="link" aria-label="Menu">${icon("bars")}</button>
        <a class="link" href="#">Trang chủ</a>
        <a class="link" href="#">Liên hệ</a>
      </div>
      <div class="group">
        ${tools.map(([name, label]) => html`<button class="link" aria-label=${label}>${icon(name)}</button>`)}
      </div>
    `;
  }
}

@customElement("code-area")
class CodeArea extends LitElement {
  @property() name = "";
  @property() label = "";
  @property() value = "";
  @property() placeholder = "";
  @property() size = "small";
  @property({ type: Boolean }) media = false;

  static styles = [
    base,
    css`
      :host {
        display: block;
      }
      .caption {
        display: block;
        font-weight: 700;
        color: #212529;
        margin-bottom: 8px;
      }
      .tools {
        display: flex;
        justify-content: flex-end;
        align-items: center;
        height: 32px;
        margin-bottom: 4px;
      }
      .media {
        display: flex;
        align-items: center;
        gap: 4px;
        height: 26px;
        margin-right: auto;
        padding: 0 12px;
        border: 1px solid #007bff;
        border-radius: 4px;
        background: none;
        color: #007bff;
        line-height: 24px;
      }
      .expand {
        display: grid;
        place-items: center;
        width: 28px;
        height: 32px;
        padding: 0;
        border-radius: 4px;
        background: #f8f9fa;
        color: #1f2d3d;
      }
      .frame {
        display: flex;
        border: 1px solid #ced4da;
        border-radius: 4px;
        background: #fff;
        overflow: hidden;
      }
      .gutter {
        width: 19px;
        padding-top: 7px;
        border-right: 1px solid #ced4da;
        background: #f7f8fb;
        color: #6c757d;
        text-align: center;
      }
      .input {
        flex: 1;
        min-width: 0;
        display: block;
        padding: 7px 12px;
        background: #fff;
        color: #495057;
        resize: vertical;
      }
      .input.small {
        height: 132px;
      }
      .input.medium {
        height: 240px;
      }
      .input.large {
        height: 492px;
      }
      .input::placeholder {
        color: #939ba2;
        opacity: 1;
      }
    `,
  ];

  render() {
    return html`
      ${this.label ? html`<label class="caption" for=${this.name}>${this.label}</label>` : nothing}
      <div class="tools">
        ${this.media ? html`<button class="media">${icon("media")}<span>Thêm đa phương tiện</span></button>` : nothing}
        <button class="expand" aria-label="Mở rộng">${icon("expand")}</button>
      </div>
      <div class="frame">
        <div class="gutter">1</div>
        <textarea
          id=${this.name}
          class="input ${this.size}"
          aria-label=${this.label ? nothing : "Nội dung"}
          placeholder=${this.placeholder}
          .value=${this.value}
        ></textarea>
      </div>
    `;
  }
}

const SETTINGS: [string, string, string?][] = [
  ["image", "Ảnh đặc trưng"],
  ["video", "Video"],
  ["volume", "Âm thanh"],
  ["hash", "Các thuật ngữ"],
  ["bezier", "Bài viết cha"],
  ["language", "Ngôn ngữ"],
  ["sort", "Độ ưu tiên"],
  ["link", "Cuối đường dẫn"],
  ["comment", "Bình luận"],
  ["asterisk", "Loại bài viết"],
  ["grid", "Kiểu nội dung", "tight"],
  ["toggles", "Trạng thái", "tight tall"],
  ["box", "Sản phẩm"],
  ["user", "Tác giả"],
  ["calendar", "Lịch đăng bài"],
  ["calendarCheck", "Xuất bản lúc"],
  ["editor", "Trình soạn thảo"],
];

@customElement("settings-panel")
class SettingsPanel extends LitElement {
  static styles = [
    base,
    css`
      :host {
        display: block;
        --hole: #f4f6f9;
        padding: 0 8px 16px;
        border: 1px solid #dee2e6;
        border-width: 1px 1px 0 0;
        color: #007bff;
      }
      .row {
        display: flex;
        align-items: center;
        width: 100%;
        height: 41px;
        padding: 0;
        border-bottom: 1px solid #dee2e6;
        background: none;
        color: inherit;
        text-align: left;
      }
      .pic {
        display: grid;
        place-items: center;
        width: 28px;
        margin-right: 5px;
        padding-bottom: 2px;
      }
      .pic .icon,
      .arrow {
        height: 18px;
      }
      .text {
        flex: 1;
      }
      .tight {
        height: 45px;
      }
      .tall {
        height: 46px;
      }
      .tight .text {
        padding-top: 2px;
      }
      .tight .pic {
        width: auto;
        margin-right: 6px;
        padding-bottom: 0;
      }
      .tight .pic .icon {
        height: 17px;
      }
      .tight .arrow {
        margin-bottom: 5px;
      }
    `,
  ];

  render() {
    return SETTINGS.map(
      ([name, text, mode]) => html`<button class="row ${mode ?? ""}" aria-expanded="false">
        <span class="pic">${icon(name)}</span><span class="text">${text}</span>${icon("angle", "arrow")}
      </button>`,
    );
  }
}

@customElement("app-root")
class AppRoot extends LitElement {
  static styles = [
    base,
    css`
      :host {
        display: grid;
        grid-template-columns: 250px minmax(0, 1fr);
        height: 100vh;
        overflow: hidden;
        padding-left: 4px;
        background: linear-gradient(90deg, #475872 12px, #f4f6f9 12px);
        color: #212529;
        font: 14px/24px "Noto Sans CJK SC", "Noto Sans", sans-serif;
      }
      .side {
        z-index: 1;
        box-shadow: 0 14px 28px rgba(0, 0, 0, 0.25), 0 10px 10px rgba(0, 0, 0, 0.22);
      }
      .main {
        overflow: hidden;
      }
      .page {
        padding: 15px 15px 0 16px;
      }
      .head {
        display: flex;
        justify-content: space-between;
        height: 66px;
      }
      .title {
        margin: 0;
        font-size: 26px;
        font-weight: 400;
        line-height: 32px;
      }
      .crumbs {
        display: flex;
        gap: 9px;
        padding-top: 2px;
        color: #6c757d;
      }
      .crumbs .up {
        color: #007bff;
      }
      .bar {
        display: flex;
        height: 42px;
        padding: 1px 2px 1px 3px;
        gap: 1px;
        margin-bottom: 8px;
        background: #dee2e6;
      }
      .save {
        margin: 1px 0;
        width: 86px;
        padding: 0;
        background: #28a745;
        color: #fff;
      }
      .name {
        flex: 1;
        min-width: 0;
        padding: 0 8px;
        background: #fff;
        color: #000;
      }
      .tool {
        display: grid;
        place-items: center;
        margin: 1px 0;
        width: 42px;
        padding: 0;
        background: #f8f9fa;
        color: #1f2d3d;
      }
      .tool.view {
        width: 44px;
        margin-left: 1px;
      }
      .tool.danger {
        width: 40px;
        color: #dc3545;
      }
      .tool.on {
        margin-left: 1px;
        background: #000;
        color: #fff;
      }
      .cols {
        display: grid;
        grid-template-columns: minmax(0, 1fr) 200px;
        align-items: start;
      }
      .form {
        display: grid;
        gap: 16px;
      }
      .fields {
        display: grid;
        grid-template-columns: repeat(4, minmax(0, 1fr));
        gap: 15px;
      }
      .field {
        display: grid;
        gap: 8px;
      }
      .caption {
        font-weight: 700;
      }
      .box {
        width: 100%;
        height: 38px;
        padding: 0 12px;
        border: 1px solid #ced4da;
        border-radius: 4px;
        background: #fff;
        color: #495057;
      }
      .box::placeholder {
        color: #939ba2;
        opacity: 1;
      }
    `,
  ];

  render() {
    return html`
      <side-menu class="side"></side-menu>
      <div class="main">
        <top-bar></top-bar>
        <main class="page">
          <div class="head">
            <h1 class="title">Sửa bài viết</h1>
            <nav class="crumbs"><a class="up" href="#">Các bài viết</a><span>/</span><span>Sửa bài viết</span></nav>
          </div>
          <div class="bar">
            <button class="save">Cập nhật</button>
            <input class="name" type="text" aria-label="Tiêu đề" .value=${"website_footer_copyright"} />
            <button class="tool" aria-label="Bỏ liên kết">${icon("unlink")}</button>
            <button class="tool view" aria-label="Xem">${icon("eye")}</button>
            <button class="tool danger" aria-label="Xóa">${icon("trash")}</button>
            <button class="tool on" aria-label="Cài đặt">${icon("cog")}</button>
          </div>
          <div class="cols">
            <div class="form">
              <code-area name="content" value="copyright" size="large" media></code-area>
              <div class="fields">
                <div class="field">
                  <label class="caption" for="page">Tên trang</label>
                  <input class="box" id="page" type="text" .value=${"website_footer"} />
                </div>
                <div class="field">
                  <label class="caption" for="fragment">Tên đoạn trang</label>
                  <input class="box" id="fragment" type="text" placeholder="Tên đoạn trang" />
                </div>
              </div>
              <code-area name="summary" label="Tóm tắt" placeholder="Tóm tắt"></code-area>
              <code-area name="header" label="Phần bổ sung đầu trang" placeholder="Phần bổ sung đầu trang" size="medium"></code-area>
            </div>
            <settings-panel></settings-panel>
          </div>
        </main>
      </div>
    `;
  }
}
